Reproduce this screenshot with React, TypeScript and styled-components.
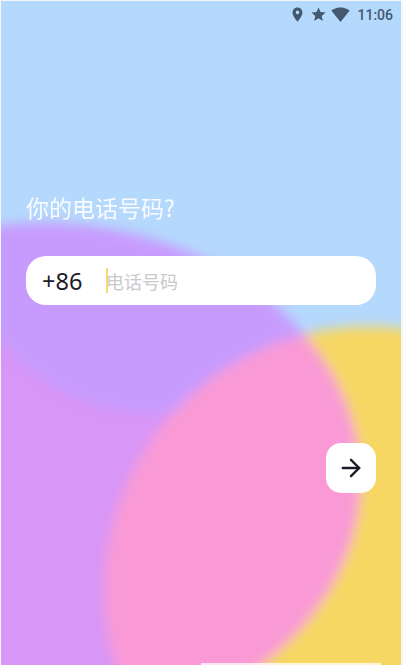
import styled, { createGlobalStyle } from "styled-components";
import { ArrowRight } from "lucide-react";
import { MdLocationOn, MdStar, MdSignalWifi4Bar } from "react-icons/md";

const GlobalStyle = createGlobalStyle`
  html, body {
    margin: 0;
    padding: 0;
    background: #f4f6f8;
  }
`;

function Blobs() {
  return (
    <BlobArt viewBox="0 0 403 665" aria-hidden="true">
      <defs>
        <filter id="soft" x="-20%" y="-20%" width="140%" height="140%">
          <feGaussianBlur stdDeviation="6" />
        </filter>
        <clipPath id="pinkClip">
          <ellipse cx="40" cy="480" rx="322" ry="258" />
        </clipPath>
      </defs>
      <rect x="-40" y="-40" width="483" height="745" fill="#b5d8fd" />
      <g filter="url(#soft)">
        <circle cx="370" cy="592" r="266" fill="#f6d764" />
        <ellipse cx="40" cy="480" rx="322" ry="258" fill="#d896f6" />
        <g clipPath="url(#pinkClip)">
          <circle cx="150" cy="221" r="192" fill="#c79bfe" />
          <circle cx="370" cy="592" r="266" fill="#f99ad6" />
        </g>
      </g>
    </BlobArt>
  );
}

export default function App() {
  return (
    <>
      <GlobalStyle />
      <Screen>
        <Blobs />
        <StatusBar>
          <MdLocationOn size={17} />
          <MdStar size={17} />
          <MdSignalWifi4Bar size={19} />
          <Clock>11:06</Clock>
        </StatusBar>

        <Title>你的电话号码?</Title>

        <PhoneField>
          <Prefix>+86</Prefix>
          <Caret />
          <Placeholder>电话号码</Placeholder>
        </PhoneField>

        <Actions>
          <NextButton type="button" aria-label="下一步">
            <ArrowRight size={28} strokeWidth={2.1} />
          </NextButton>
        </Actions>

        <HomeStrip />
      </Screen>
    </>
  );
}

const Screen = styled.div`
  position: relative;
  box-sizing: border-box;
  width: 403px;
  height: 665px;
  margin: 0;
  padding: 1px 2px 0 1px;
  overflow: hidden;
  display: flex;
  flex-direction: column;
  font-family: "Noto Sans CJK SC", "Noto Sans", sans-serif;
`;

const BlobArt = styled.svg`
  position: absolute;
  left: 1px;
  top: 1px;
  width: 400px;
  height: 664px;
`;

const StatusBar = styled.div`
  position: relative;
  height: 27px;
  display: flex;
  align-items: center;
  justify-content: flex-end;
  gap: 4px;
  padding-right: 8px;
  color: #44586f;
`;

const Clock = styled.span`
  margin-left: 3px;
  font-family: Roboto, sans-serif;
  font-size: 14px;
  font-weight: 500;
`;

const Title = styled.h1`
  position: relative;
  margin: 162px 0 0 25px;
  font-size: 23px;
  line-height: 34px;
  font-weight: 400;
  color: #ffffff;
  opacity: 0.92;
`;

const PhoneField = styled.div`
  position: relative;
  margin: 32px 0 0 25px;
  width: 350px;
  height: 49px;
  display: flex;
  align-items: center;
  background: #ffffff;
  border-radius: 20px;
`;

const Prefix = styled.span`
  width: 64px;
  padding-left: 16px;
  font-family: "Noto Sans", sans-serif;
  font-size: 23.5px;
  color: #1c1c28;
`;

const Caret = styled.span`
  width: 2px;
  height: 25px;
  margin-right: -2px;
  background: #f3da73;
`;

const Placeholder = styled.span`
  font-size: 18px;
  line-height: 26px;
  color: #c9c9cc;
`;

const Actions = styled.div`
  position: relative;
  margin: 138px 0 0 325px;
`;

const NextButton = styled.button`
  width: 50px;
  height: 50px;
  padding: 0;
  border: none;
  border-radius: 15px;
  background: #ffffff;
  color: #1c1c28;
  display: flex;
  align-items: center;
  justify-content: center;
`;

const HomeStrip = styled.div`
  position: absolute;
  left: 201px;
  bottom: 0;
  width: 180px;
  height: 2px;
  background: rgba(255, 255, 255, 0.75);
`;
